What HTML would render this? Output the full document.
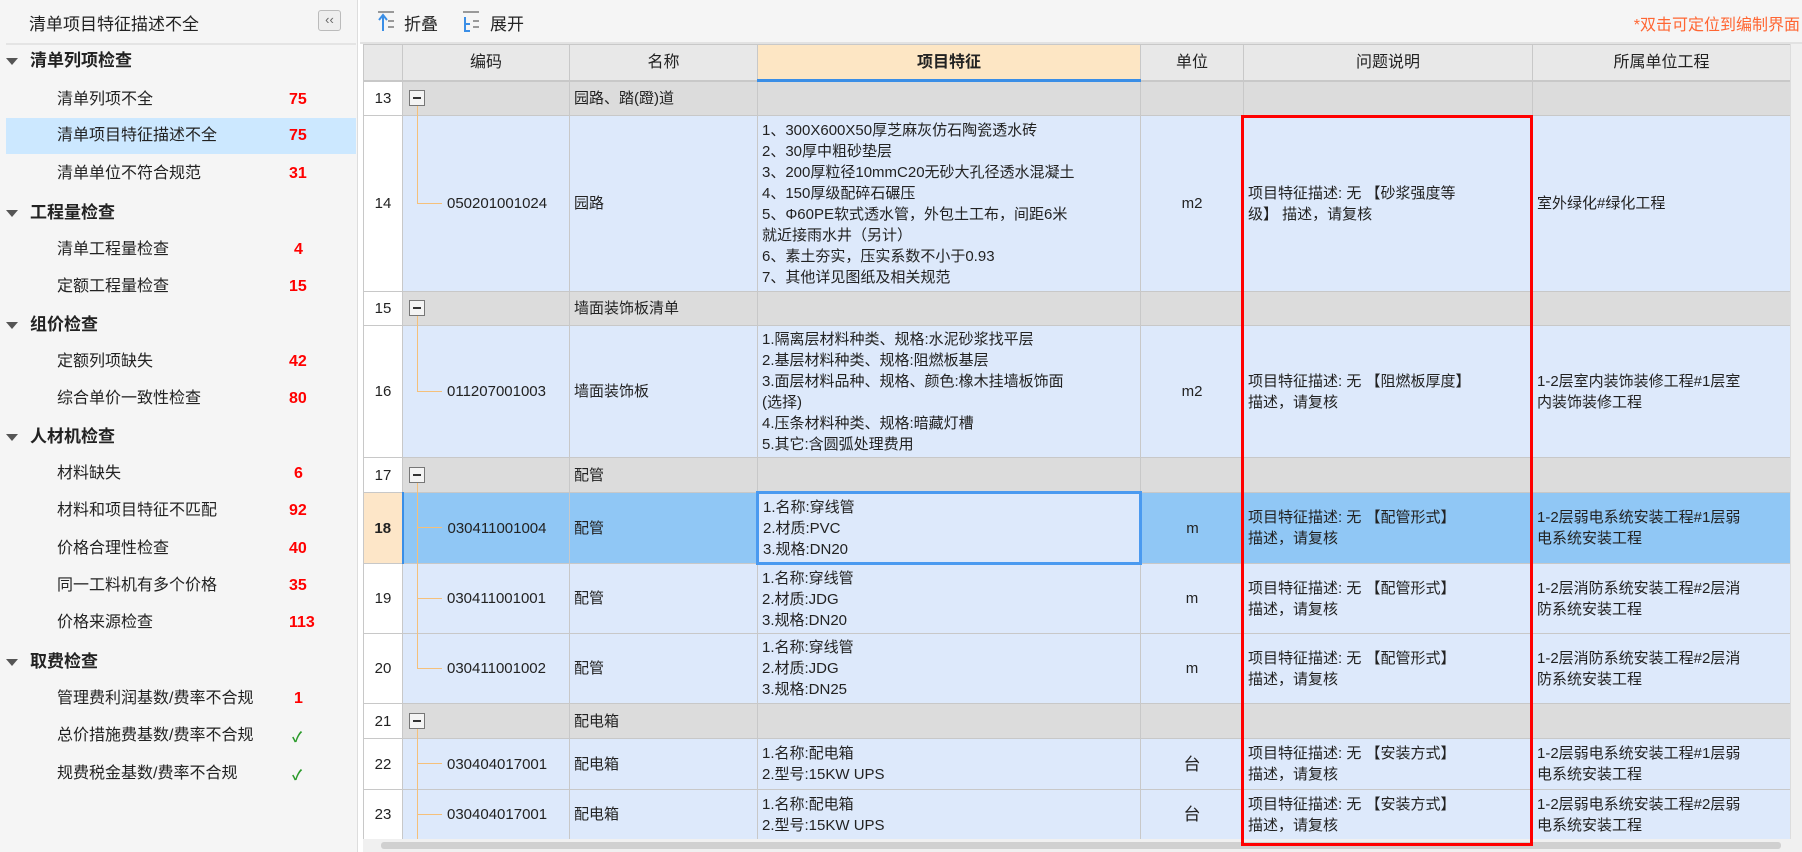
<!DOCTYPE html>
<html><head><meta charset="utf-8"><style>
*{margin:0;padding:0;box-sizing:border-box}
body{width:1802px;height:852px;overflow:hidden;background:#fff;font-family:"Liberation Sans","Noto Sans CJK SC",sans-serif;color:#222;position:relative}
#left{position:absolute;left:0;top:0;width:358px;height:852px;background:#f5f5f5;border-right:1px solid #ddd}
#left .title{position:absolute;left:29px;top:10px;font-size:17px}
#left .hr{position:absolute;left:6px;top:43px;width:350px;height:2px;background:#e4e4e4}
.btn{position:absolute;left:318px;top:10px;width:23px;height:21px;border:1px solid #bbb;border-radius:3px;background:#eee;font-size:13px;text-align:center;line-height:18px;color:#666}
.it{position:absolute;left:0;width:356px;height:36px;line-height:36px;font-size:16px}
.it.cat{font-weight:bold;font-size:17px;padding-left:30px}
.it.cat:before{content:"";position:absolute;left:6px;top:15px;border-left:6px solid transparent;border-right:6px solid transparent;border-top:7px solid #555}
.it.sub{padding-left:57px}
.it.sel{background:#cce8ff;left:6px;width:350px;padding-left:51px}
.it .n{position:absolute;left:289px;color:#f00;font-weight:bold}
.it .ok{position:absolute;left:292px;color:#2a9a2a;font-weight:bold;font-size:14px;top:1px}
#tb{position:absolute;left:360px;top:0;width:1442px;height:44px;background:#f5f5f5;border-bottom:2px solid #e2e2e2}
#tb .t{position:absolute;top:10px;font-size:17px}
#tb .note{position:absolute;right:2px;top:11px;font-size:16px;color:#ff6633}
table{position:absolute;left:363px;top:44px;border-collapse:collapse;table-layout:fixed;font-size:15px}
td,th{border:1px solid #c8c8c8;overflow:hidden;padding:0 4px;white-space:nowrap;line-height:21px;text-align:left}
th{background:#e8e8e8;font-weight:normal;font-size:16px;height:36px;border-bottom:2px solid #c8c8c8;text-align:center}
th.hl{background:#fde6c4;font-weight:bold;border-bottom:3px solid #3a8ee6}
td.rn{background:#fff;text-align:center;padding:0}
tr.g td{background:#dcdcdc}
tr.g td.rn{background:#fff}
tr.d td{background:#dde9fb}
tr.d td.rn{background:#fff}
tr.s td{background:#90c7f5}
tr.s td.rn{background:#fde6c8;font-weight:bold;border-right:2px solid #3a8ee6}
tr.s td.f{background:#dde9fb;border:3px solid #4a9af0}
td.c{text-align:center}
td.code{padding-left:44px;padding-right:0}
.ln{position:absolute;background:#f5c07a}
.box{position:absolute;width:16px;height:16px;border:1px solid #777;background:#f4f4f4}
.box:after{content:"";position:absolute;left:3px;top:6px;width:8px;height:2px;background:#333}
#red{position:absolute;left:1241px;top:115px;width:292px;height:731px;border:3px solid #f00}
#vs{position:absolute;left:1790px;top:44px;width:12px;height:795px;background:#f0f0f0;border-left:1px solid #ddd}
#hs{position:absolute;left:363px;top:839px;width:1439px;height:13px;background:#f0f0f0}
#hs div{position:absolute;left:18px;top:3px;width:1400px;height:7px;background:#d0d0d0;border-radius:3px}
</style></head><body>
<div id="left">
<div class="title">清单项目特征描述不全</div>
<div class="btn">&lsaquo;&lsaquo;</div>
<div class="hr"></div>
<div class="it cat" style="top:43px">清单列项检查</div>
<div class="it sub" style="top:82px">清单列项不全<span class="n">75</span></div>
<div class="it sel" style="top:118px">清单项目特征描述不全<span class="n" style="left:283px">75</span></div>
<div class="it sub" style="top:156px">清单单位不符合规范<span class="n">31</span></div>
<div class="it cat" style="top:195px">工程量检查</div>
<div class="it sub" style="top:232px">清单工程量检查<span class="n" style="left:294px">4</span></div>
<div class="it sub" style="top:269px">定额工程量检查<span class="n">15</span></div>
<div class="it cat" style="top:307px">组价检查</div>
<div class="it sub" style="top:344px">定额列项缺失<span class="n">42</span></div>
<div class="it sub" style="top:381px">综合单价一致性检查<span class="n">80</span></div>
<div class="it cat" style="top:419px">人材机检查</div>
<div class="it sub" style="top:456px">材料缺失<span class="n" style="left:294px">6</span></div>
<div class="it sub" style="top:493px">材料和项目特征不匹配<span class="n">92</span></div>
<div class="it sub" style="top:531px">价格合理性检查<span class="n">40</span></div>
<div class="it sub" style="top:568px">同一工料机有多个价格<span class="n">35</span></div>
<div class="it sub" style="top:605px">价格来源检查<span class="n">113</span></div>
<div class="it cat" style="top:644px">取费检查</div>
<div class="it sub" style="top:681px">管理费利润基数/费率不合规<span class="n" style="left:294px">1</span></div>
<div class="it sub" style="top:718px">总价措施费基数/费率不合规<span class="ok">✓</span></div>
<div class="it sub" style="top:756px">规费税金基数/费率不合规<span class="ok">✓</span></div>
</div>
<div id="tb">
<svg style="position:absolute;left:18px;top:11px" width="20" height="22"><rect x="0" y="0" width="16" height="2" fill="#999"/><path d="M5 20V5M1 9l4-5 4 5" stroke="#3a8ee6" stroke-width="2" fill="none"/><rect x="10" y="9" width="6" height="2" fill="#999"/><rect x="10" y="15" width="6" height="2" fill="#999"/></svg>
<span class="t" style="left:44px">折叠</span>
<svg style="position:absolute;left:103px;top:11px" width="20" height="22"><rect x="0" y="0" width="16" height="2" fill="#999"/><path d="M2 6V20H7M2 13H7" stroke="#3a8ee6" stroke-width="2" fill="none"/><rect x="10" y="9" width="6" height="2" fill="#999"/><rect x="10" y="15" width="6" height="2" fill="#999"/></svg>
<span class="t" style="left:130px">展开</span>
<span class="note">*双击可定位到编制界面</span>
</div>
<table>
<colgroup><col style="width:39px"><col style="width:167px"><col style="width:188px"><col style="width:383px"><col style="width:103px"><col style="width:289px"><col style="width:258px"></colgroup>
<tr><th style="background:#e8e8e8"></th><th>编码</th><th>名称</th><th class="hl">项目特征</th><th>单位</th><th>问题说明</th><th>所属单位工程</th></tr>
<tr class="g" style="height:35px"><td class="rn">13</td><td></td><td>园路、踏(蹬)道</td><td></td><td></td><td></td><td></td></tr>
<tr class="d" style="height:176px"><td class="rn">14</td><td class="code">050201001024</td><td>园路</td><td>1、300X600X50厚芝麻灰仿石陶瓷透水砖<br>2、30厚中粗砂垫层<br>3、200厚粒径10mmC20无砂大孔径透水混凝土<br>4、150厚级配碎石碾压<br>5、Φ60PE软式透水管，外包土工布，间距6米<br>就近接雨水井（另计）<br>6、素土夯实，压实系数不小于0.93<br>7、其他详见图纸及相关规范</td><td class="c">m2</td><td>项目特征描述: 无 【砂浆强度等<br>级】 描述，请复核</td><td>室外绿化#绿化工程</td></tr>
<tr class="g" style="height:34px"><td class="rn">15</td><td></td><td>墙面装饰板清单</td><td></td><td></td><td></td><td></td></tr>
<tr class="d" style="height:132px"><td class="rn">16</td><td class="code">011207001003</td><td>墙面装饰板</td><td>1.隔离层材料种类、规格:水泥砂浆找平层<br>2.基层材料种类、规格:阻燃板基层<br>3.面层材料品种、规格、颜色:橡木挂墙板饰面<br>(选择)<br>4.压条材料种类、规格:暗藏灯槽<br>5.其它:含圆弧处理费用</td><td class="c">m2</td><td>项目特征描述: 无 【阻燃板厚度】<br>描述，请复核</td><td>1-2层室内装饰装修工程#1层室<br>内装饰装修工程</td></tr>
<tr class="g" style="height:35px"><td class="rn">17</td><td></td><td>配管</td><td></td><td></td><td></td><td></td></tr>
<tr class="s" style="height:71px"><td class="rn">18</td><td class="code">030411001004</td><td>配管</td><td class="f">1.名称:穿线管<br>2.材质:PVC<br>3.规格:DN20</td><td class="c">m</td><td>项目特征描述: 无 【配管形式】<br>描述，请复核</td><td>1-2层弱电系统安装工程#1层弱<br>电系统安装工程</td></tr>
<tr class="d" style="height:70px"><td class="rn">19</td><td class="code">030411001001</td><td>配管</td><td>1.名称:穿线管<br>2.材质:JDG<br>3.规格:DN20</td><td class="c">m</td><td>项目特征描述: 无 【配管形式】<br>描述，请复核</td><td>1-2层消防系统安装工程#2层消<br>防系统安装工程</td></tr>
<tr class="d" style="height:70px"><td class="rn">20</td><td class="code">030411001002</td><td>配管</td><td>1.名称:穿线管<br>2.材质:JDG<br>3.规格:DN25</td><td class="c">m</td><td>项目特征描述: 无 【配管形式】<br>描述，请复核</td><td>1-2层消防系统安装工程#2层消<br>防系统安装工程</td></tr>
<tr class="g" style="height:35px"><td class="rn">21</td><td></td><td>配电箱</td><td></td><td></td><td></td><td></td></tr>
<tr class="d" style="height:51px"><td class="rn">22</td><td class="code">030404017001</td><td>配电箱</td><td>1.名称:配电箱<br>2.型号:15KW UPS</td><td class="c" style="font-size:17px">台</td><td>项目特征描述: 无 【安装方式】<br>描述，请复核</td><td>1-2层弱电系统安装工程#1层弱<br>电系统安装工程</td></tr>
<tr class="d" style="height:50px"><td class="rn">23</td><td class="code">030404017001</td><td>配电箱</td><td>1.名称:配电箱<br>2.型号:15KW UPS</td><td class="c" style="font-size:17px">台</td><td>项目特征描述: 无 【安装方式】<br>描述，请复核</td><td>1-2层弱电系统安装工程#2层弱<br>电系统安装工程</td></tr>
</table>
<div class="ln" style="left:417px;top:106px;width:1px;height:97px"></div><div class="ln" style="left:417px;top:203px;width:25px;height:1px"></div>
<div class="ln" style="left:417px;top:316px;width:1px;height:75px"></div><div class="ln" style="left:417px;top:391px;width:25px;height:1px"></div>
<div class="ln" style="left:417px;top:483px;width:1px;height:185px"></div>
<div class="ln" style="left:417px;top:527px;width:25px;height:1px"></div>
<div class="ln" style="left:417px;top:598px;width:25px;height:1px"></div>
<div class="ln" style="left:417px;top:668px;width:25px;height:1px"></div>
<div class="ln" style="left:417px;top:729px;width:1px;height:110px"></div>
<div class="ln" style="left:417px;top:763px;width:25px;height:1px"></div>
<div class="ln" style="left:417px;top:814px;width:25px;height:1px"></div>
<div class="box" style="left:409px;top:90px"></div>
<div class="box" style="left:409px;top:300px"></div>
<div class="box" style="left:409px;top:467px"></div>
<div class="box" style="left:409px;top:713px"></div>
<div id="vs"></div>
<div id="hs"><div></div></div>
<div id="red"></div>
</body></html>
